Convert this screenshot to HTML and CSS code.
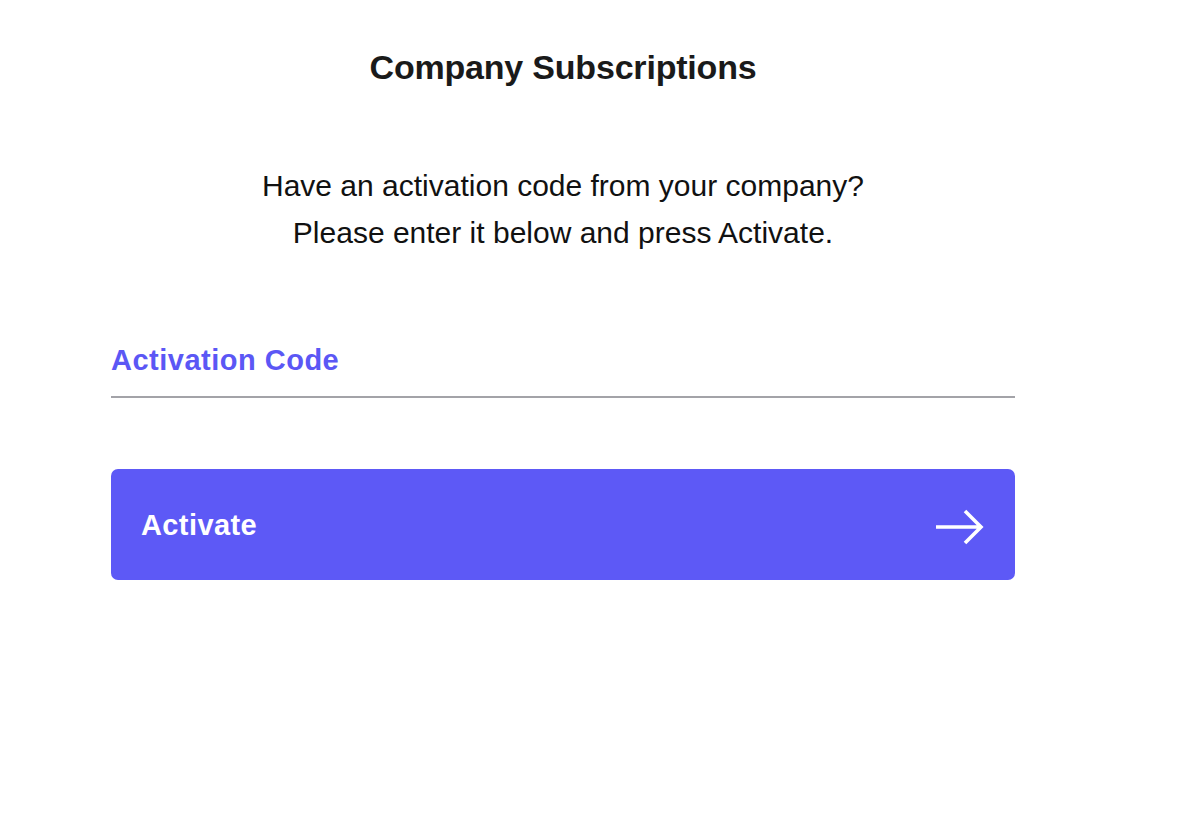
FILE: index.html
```html
<!DOCTYPE html>
<html lang="en">
<head>
<meta charset="utf-8">
<title>Company Subscriptions</title>
<link rel="stylesheet" href="styles.css">
</head>
<body>
<main class="page">
  <h1 class="title">Company Subscriptions</h1>
  <p class="intro">Have an activation code from your company?<br>Please enter it below and press Activate.</p>
  <label class="field">
    <span class="field-label">Activation Code</span>
    <input class="field-input" type="text" aria-label="Activation Code">
  </label>
  <button class="btn" type="button">
    <span class="btn-text">Activate</span>
    <svg class="btn-icon" width="50" height="38" viewBox="0 0 50 38" aria-hidden="true">
      <path d="M1 19 H46 M30 3 L46 19 L30 35" fill="none" stroke="#fff" stroke-width="3.6" stroke-linecap="butt" stroke-linejoin="miter"/>
    </svg>
  </button>
</main>
</body>
</html>
```

FILE: styles.css
```css
html, body {
  margin: 0;
  padding: 0;
  background: #ffffff;
}
body {
  font-family: "Liberation Sans", Arial, sans-serif;
  color: #111;
}
.page {
  width: 904px;
  margin-left: 111px;
  display: flex;
  flex-direction: column;
}
.title {
  margin: 45px 0 0;
  text-align: center;
  font-size: 34px;
  line-height: 44px;
  font-weight: 700;
  letter-spacing: -0.2px;
  color: #1a1a1a;
}
.intro {
  margin: 73px 0 0;
  text-align: center;
  font-size: 30px;
  line-height: 47px;
  letter-spacing: 0;
  color: #111;
}
.field {
  margin-top: 86px;
  display: flex;
  flex-direction: column;
  border-bottom: 2px solid #a3a3a8;
}
.field-label {
  font-size: 29px;
  line-height: 36px;
  font-weight: 700;
  letter-spacing: 0.5px;
  color: #5b57f5;
}
.field-input {
  border: 0;
  outline: 0;
  height: 18px;
  padding: 0;
  background: transparent;
}
.btn {
  margin-top: 71px;
  height: 111px;
  border: 0;
  border-radius: 7px;
  background: #5d59f6;
  color: #fff;
  display: flex;
  align-items: center;
  justify-content: space-between;
  padding: 0 30px;
  font-family: inherit;
  cursor: pointer;
}
.btn-text {
  font-size: 29px;
  font-weight: 700;
  letter-spacing: 0.4px;
  padding-top: 2px;
}
.btn-icon {
  display: block;
  margin-top: 4px;
}
```
